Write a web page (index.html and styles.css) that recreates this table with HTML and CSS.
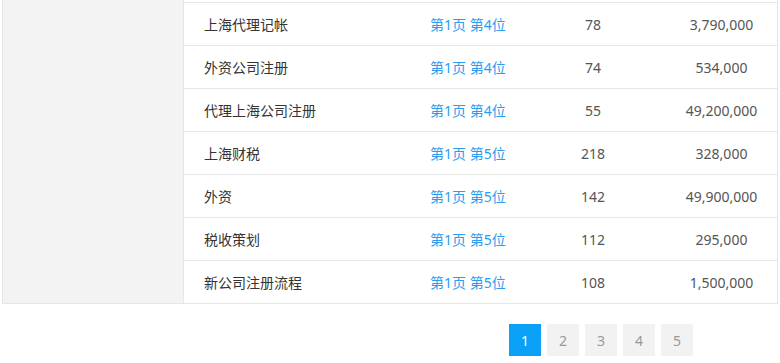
FILE: index.html
```html
<!DOCTYPE html>
<html lang="zh-CN">
<head>
<meta charset="utf-8">
<link rel="stylesheet" href="styles.css">
</head>
<body>
<div class="wrap">
  <div class="side"></div>
  <div class="table">
    <div class="spacer"></div>
    <div class="row"><div class="c-name">上海代理记帐</div><div class="c-rank">第1页 第4位</div><div class="c-num">78</div><div class="c-amt">3,790,000</div></div>
    <div class="row"><div class="c-name">外资公司注册</div><div class="c-rank">第1页 第4位</div><div class="c-num">74</div><div class="c-amt">534,000</div></div>
    <div class="row"><div class="c-name">代理上海公司注册</div><div class="c-rank">第1页 第4位</div><div class="c-num">55</div><div class="c-amt">49,200,000</div></div>
    <div class="row"><div class="c-name">上海财税</div><div class="c-rank">第1页 第5位</div><div class="c-num">218</div><div class="c-amt">328,000</div></div>
    <div class="row"><div class="c-name">外资</div><div class="c-rank">第1页 第5位</div><div class="c-num">142</div><div class="c-amt">49,900,000</div></div>
    <div class="row"><div class="c-name">税收策划</div><div class="c-rank">第1页 第5位</div><div class="c-num">112</div><div class="c-amt">295,000</div></div>
    <div class="row"><div class="c-name">新公司注册流程</div><div class="c-rank">第1页 第5位</div><div class="c-num">108</div><div class="c-amt">1,500,000</div></div>
  </div>
</div>
<div class="pager">
  <span class="page active">1</span>
  <span class="page">2</span>
  <span class="page">3</span>
  <span class="page">4</span>
  <span class="page">5</span>
</div>
</body>
</html>
```

FILE: styles.css
```css
html, body {
  margin: 0;
  padding: 0;
  background: #fff;
}
body {
  font-family: "Noto Sans", "Noto Sans CJK SC", sans-serif;
  font-size: 14px;
  color: #333;
}
.wrap {
  display: flex;
  margin-left: 2px;
  width: 776px;
  box-sizing: border-box;
  border-left: 1px solid #e6e6e6;
  border-right: 1px solid #e6e6e6;
  border-bottom: 1px solid #e6e6e6;
}
.side {
  width: 180px;
  flex: none;
  background: #f3f3f3;
  border-right: 1px solid #e6e6e6;
}
.table {
  flex: 1;
}
.spacer {
  height: 2px;
}
.row {
  display: grid;
  grid-template-columns: 246px 96px 134px 1fr;
  align-items: center;
  height: 42px;
  border-top: 1px solid #e6e6e6;
}
.c-name {
  padding-left: 20px;
  color: #333;
}
.c-rank {
  color: #2a9df0;
}
.c-num {
  text-align: center;
  color: #555;
}
.c-amt {
  text-align: center;
  padding-left: 6px;
  color: #555;
}
.pager {
  display: flex;
  gap: 6px;
  margin-left: 509px;
  margin-top: 20px;
}
.page {
  width: 32px;
  height: 32px;
  display: flex;
  align-items: center;
  justify-content: center;
  background: #f2f2f2;
  color: #999;
  font-size: 14px;
}
.page.active {
  background: #0aa0f5;
  color: #fff;
}
```
